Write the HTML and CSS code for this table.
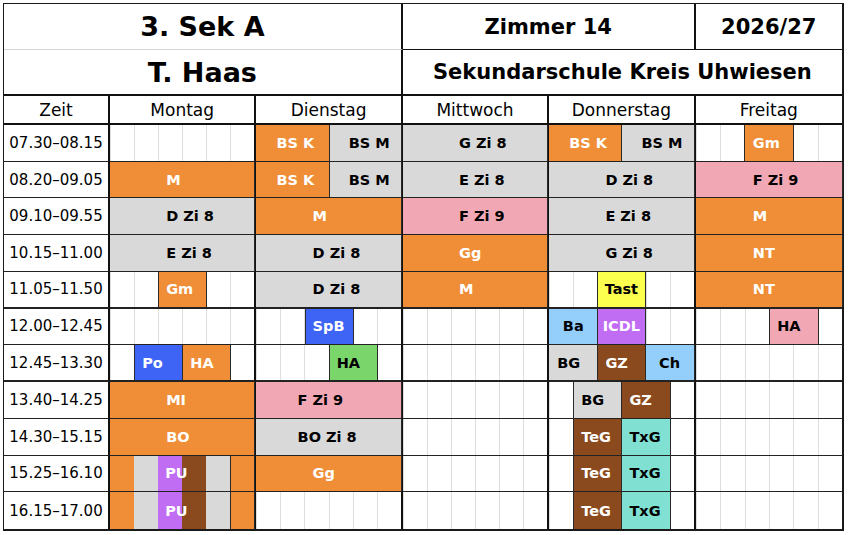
FILE: index.html
```html
<!DOCTYPE html>
<html lang="de">
<head>
<meta charset="utf-8">
<title>Stundenplan 3. Sek A</title>
<link rel="stylesheet" href="styles.css">
</head>
<body>
<div class="sheet">
  <div class="title t-class">3. Sek A</div>
  <div class="title t-room">Zimmer 14</div>
  <div class="title t-year">2026/27</div>
  <div class="title t-teacher">T. Haas</div>
  <div class="title t-school">Sekundarschule Kreis Uhwiesen</div>

  <div class="row dayhead">
    <div>Zeit</div><div>Montag</div><div>Dienstag</div><div>Mittwoch</div><div>Donnerstag</div><div>Freitag</div>
  </div>

  <div class="row">
    <div class="time">07.30–08.15</div>
    <div class="day"></div>
    <div class="day"><div class="b c1 s3 or"><span class="lbl">BS K</span></div><div class="b c4 s3 gr"><span class="lbl">BS M</span></div></div>
    <div class="day"><div class="b full gr"><span class="lbl">G Zi 8</span></div></div>
    <div class="day"><div class="b c1 s3 or"><span class="lbl">BS K</span></div><div class="b c4 s3 gr"><span class="lbl">BS M</span></div></div>
    <div class="day"><div class="b c3 s2 or"><span class="lbl">Gm</span></div></div>
  </div>

  <div class="row">
    <div class="time">08.20–09.05</div>
    <div class="day"><div class="b full or"><span class="lbl">M</span></div></div>
    <div class="day"><div class="b c1 s3 or"><span class="lbl">BS K</span></div><div class="b c4 s3 gr"><span class="lbl">BS M</span></div></div>
    <div class="day"><div class="b full gr"><span class="lbl">E Zi 8</span></div></div>
    <div class="day"><div class="b full gr"><span class="lbl">D Zi 8</span></div></div>
    <div class="day"><div class="b full pk"><span class="lbl">F Zi 9</span></div></div>
  </div>

  <div class="row">
    <div class="time">09.10–09.55</div>
    <div class="day"><div class="b full gr"><span class="lbl">D Zi 8</span></div></div>
    <div class="day"><div class="b full or"><span class="lbl">M</span></div></div>
    <div class="day"><div class="b full pk"><span class="lbl">F Zi 9</span></div></div>
    <div class="day"><div class="b full gr"><span class="lbl">E Zi 8</span></div></div>
    <div class="day"><div class="b full or"><span class="lbl">M</span></div></div>
  </div>

  <div class="row">
    <div class="time">10.15–11.00</div>
    <div class="day"><div class="b full gr"><span class="lbl">E Zi 8</span></div></div>
    <div class="day"><div class="b full gr"><span class="lbl">D Zi 8</span></div></div>
    <div class="day"><div class="b full or"><span class="lbl">Gg</span></div></div>
    <div class="day"><div class="b full gr"><span class="lbl">G Zi 8</span></div></div>
    <div class="day"><div class="b full or"><span class="lbl">NT</span></div></div>
  </div>

  <div class="row thick">
    <div class="time">11.05–11.50</div>
    <div class="day"><div class="b c3 s2 or"><span class="lbl">Gm</span></div></div>
    <div class="day"><div class="b full gr"><span class="lbl">D Zi 8</span></div></div>
    <div class="day"><div class="b full or"><span class="lbl">M</span></div></div>
    <div class="day"><div class="b c3 s2 ye ctr"><span class="lbl">Tast</span></div></div>
    <div class="day"><div class="b full or"><span class="lbl">NT</span></div></div>
  </div>

  <div class="row">
    <div class="time">12.00–12.45</div>
    <div class="day"></div>
    <div class="day"><div class="b c3 s2 bl"><span class="lbl">SpB</span></div></div>
    <div class="day"></div>
    <div class="day"><div class="b c1 s2 lb ctr"><span class="lbl">Ba</span></div><div class="b c3 s2 pu ctr"><span class="lbl">ICDL</span></div></div>
    <div class="day"><div class="b c4 s2 pk"><span class="lbl">HA</span></div></div>
  </div>

  <div class="row thick">
    <div class="time">12.45–13.30</div>
    <div class="day"><div class="b c2 s2 bl"><span class="lbl">Po</span></div><div class="b c4 s2 or"><span class="lbl">HA</span></div></div>
    <div class="day"><div class="b c4 s2 gn"><span class="lbl">HA</span></div></div>
    <div class="day"></div>
    <div class="day"><div class="b c1 s2 gr"><span class="lbl">BG</span></div><div class="b c3 s2 br"><span class="lbl">GZ</span></div><div class="b c5 s2 lb ctr"><span class="lbl">Ch</span></div></div>
    <div class="day"></div>
  </div>

  <div class="row">
    <div class="time">13.40–14.25</div>
    <div class="day"><div class="b full or"><span class="lbl">MI</span></div></div>
    <div class="day"><div class="b full pk wide"><span class="lbl">F Zi 9</span></div></div>
    <div class="day"></div>
    <div class="day"><div class="b c2 s2 gr"><span class="lbl">BG</span></div><div class="b c4 s2 br"><span class="lbl">GZ</span></div></div>
    <div class="day"></div>
  </div>

  <div class="row">
    <div class="time">14.30–15.15</div>
    <div class="day"><div class="b full or"><span class="lbl">BO</span></div></div>
    <div class="day"><div class="b full gr wide"><span class="lbl">BO Zi 8</span></div></div>
    <div class="day"></div>
    <div class="day"><div class="b c2 s2 br"><span class="lbl">TeG</span></div><div class="b c4 s2 tq"><span class="lbl">TxG</span></div></div>
    <div class="day"></div>
  </div>

  <div class="row">
    <div class="time">15.25–16.10</div>
    <div class="day"><div class="b c1 or flat"></div><div class="b c2 gr flat"></div><div class="b c3 pu flat top"><span class="lbl">PU</span></div><div class="b c4 br flat"></div><div class="b c5 gr flat"></div><div class="b c6 or"></div></div>
    <div class="day"><div class="b full or"><span class="lbl">Gg</span></div></div>
    <div class="day"></div>
    <div class="day"><div class="b c2 s2 br"><span class="lbl">TeG</span></div><div class="b c4 s2 tq"><span class="lbl">TxG</span></div></div>
    <div class="day"></div>
  </div>

  <div class="row">
    <div class="time">16.15–17.00</div>
    <div class="day"><div class="b c1 or flat"></div><div class="b c2 gr flat"></div><div class="b c3 pu flat top"><span class="lbl">PU</span></div><div class="b c4 br flat"></div><div class="b c5 gr flat"></div><div class="b c6 or"></div></div>
    <div class="day"></div>
    <div class="day"></div>
    <div class="day"><div class="b c2 s2 br"><span class="lbl">TeG</span></div><div class="b c4 s2 tq"><span class="lbl">TxG</span></div></div>
    <div class="day"></div>
  </div>
</div>
</body>
</html>
```

FILE: styles.css
```css
* { box-sizing: border-box; }
html, body { margin: 0; background: #fff; }
body { font-family: "DejaVu Sans", Verdana, sans-serif; color: #000; }

.sheet {
  margin: 3px 0 0 3px;
  width: 841px;
  height: 528px;
  border-style: solid;
  border-color: #1a1a1a;
  border-width: 1px 2px 2px 1px;
  display: grid;
  grid-template-columns: 106px repeat(5, 1fr);
  grid-template-rows: 46px 46px 29px repeat(11, 1fr);
}

.title {
  display: flex;
  align-items: center;
  justify-content: center;
  font-weight: bold;
  white-space: nowrap;
}
.t-class { grid-column: 1 / 4; border-right: 2px solid #111; border-bottom: 1px solid #d4d4d4; font-size: 27px; }
.t-room { grid-column: 4 / 6; border-right: 2px solid #111; border-bottom: 1px solid #111; font-size: 21px; }
.t-year { grid-column: 6 / 7; border-bottom: 1px solid #111; font-size: 21px; }
.t-teacher { grid-column: 1 / 4; border-right: 2px solid #111; border-bottom: 2px solid #111; font-size: 27px; }
.t-school { grid-column: 4 / 7; border-bottom: 2px solid #111; font-size: 21px; }

.row { display: contents; }
.row > * { border-right: 2px solid #111; border-bottom: 1px solid #222; min-width: 0; }
.row > :last-child { border-right: 0; }
.row.thick > * { border-bottom-width: 2px; }
.row:last-child > * { border-bottom: 0; }

.dayhead > * {
  border-bottom: 2px solid #111;
  display: flex;
  align-items: center;
  justify-content: center;
  font-size: 17px;
}

.time {
  display: flex;
  align-items: center;
  justify-content: center;
  font-size: 15px;
}

.day {
  display: grid;
  grid-template-columns: repeat(6, 1fr);
  background: repeating-linear-gradient(90deg, #dedede 0 1px, transparent 1px calc(100% / 6));
}

.b {
  grid-row: 1;
  display: flex;
  align-items: center;
  justify-content: center;
  padding: 0 7px;
  font-size: 14.5px;
  font-weight: bold;
  white-space: nowrap;
  min-width: 0;
  box-shadow: inset 1px 0 #2a2a2a, 1px 0 #2a2a2a;
}
.b.c1, .b.full { box-shadow: 1px 0 #2a2a2a; }
.b.flat { box-shadow: none; }
.b.top { z-index: 1; }

.lbl { width: 32px; min-width: 0; flex: 0 1 auto; text-align: left; }
.ctr { padding: 0; }
.ctr .lbl { width: auto; }
.wide .lbl { width: 62px; }

.c1 { grid-column-start: 1; }
.c2 { grid-column-start: 2; }
.c3 { grid-column-start: 3; }
.c4 { grid-column-start: 4; }
.c5 { grid-column-start: 5; }
.c6 { grid-column-start: 6; }
.s2 { grid-column-end: span 2; }
.s3 { grid-column-end: span 3; }
.full { grid-column: 1 / -1; }

.or { background: #ef8e36; color: #fff; }
.gr { background: #d9d9d9; color: #000; }
.pk { background: #f2a8b4; color: #000; }
.bl { background: #3d64f5; color: #fff; }
.gn { background: #7ad66b; color: #000; }
.ye { background: #fdff4f; color: #000; }
.lb { background: #94cffb; color: #000; }
.pu { background: #c06cf3; color: #fff; }
.br { background: #8b4a1d; color: #fff; }
.tq { background: #80e1d3; color: #000; }
```
